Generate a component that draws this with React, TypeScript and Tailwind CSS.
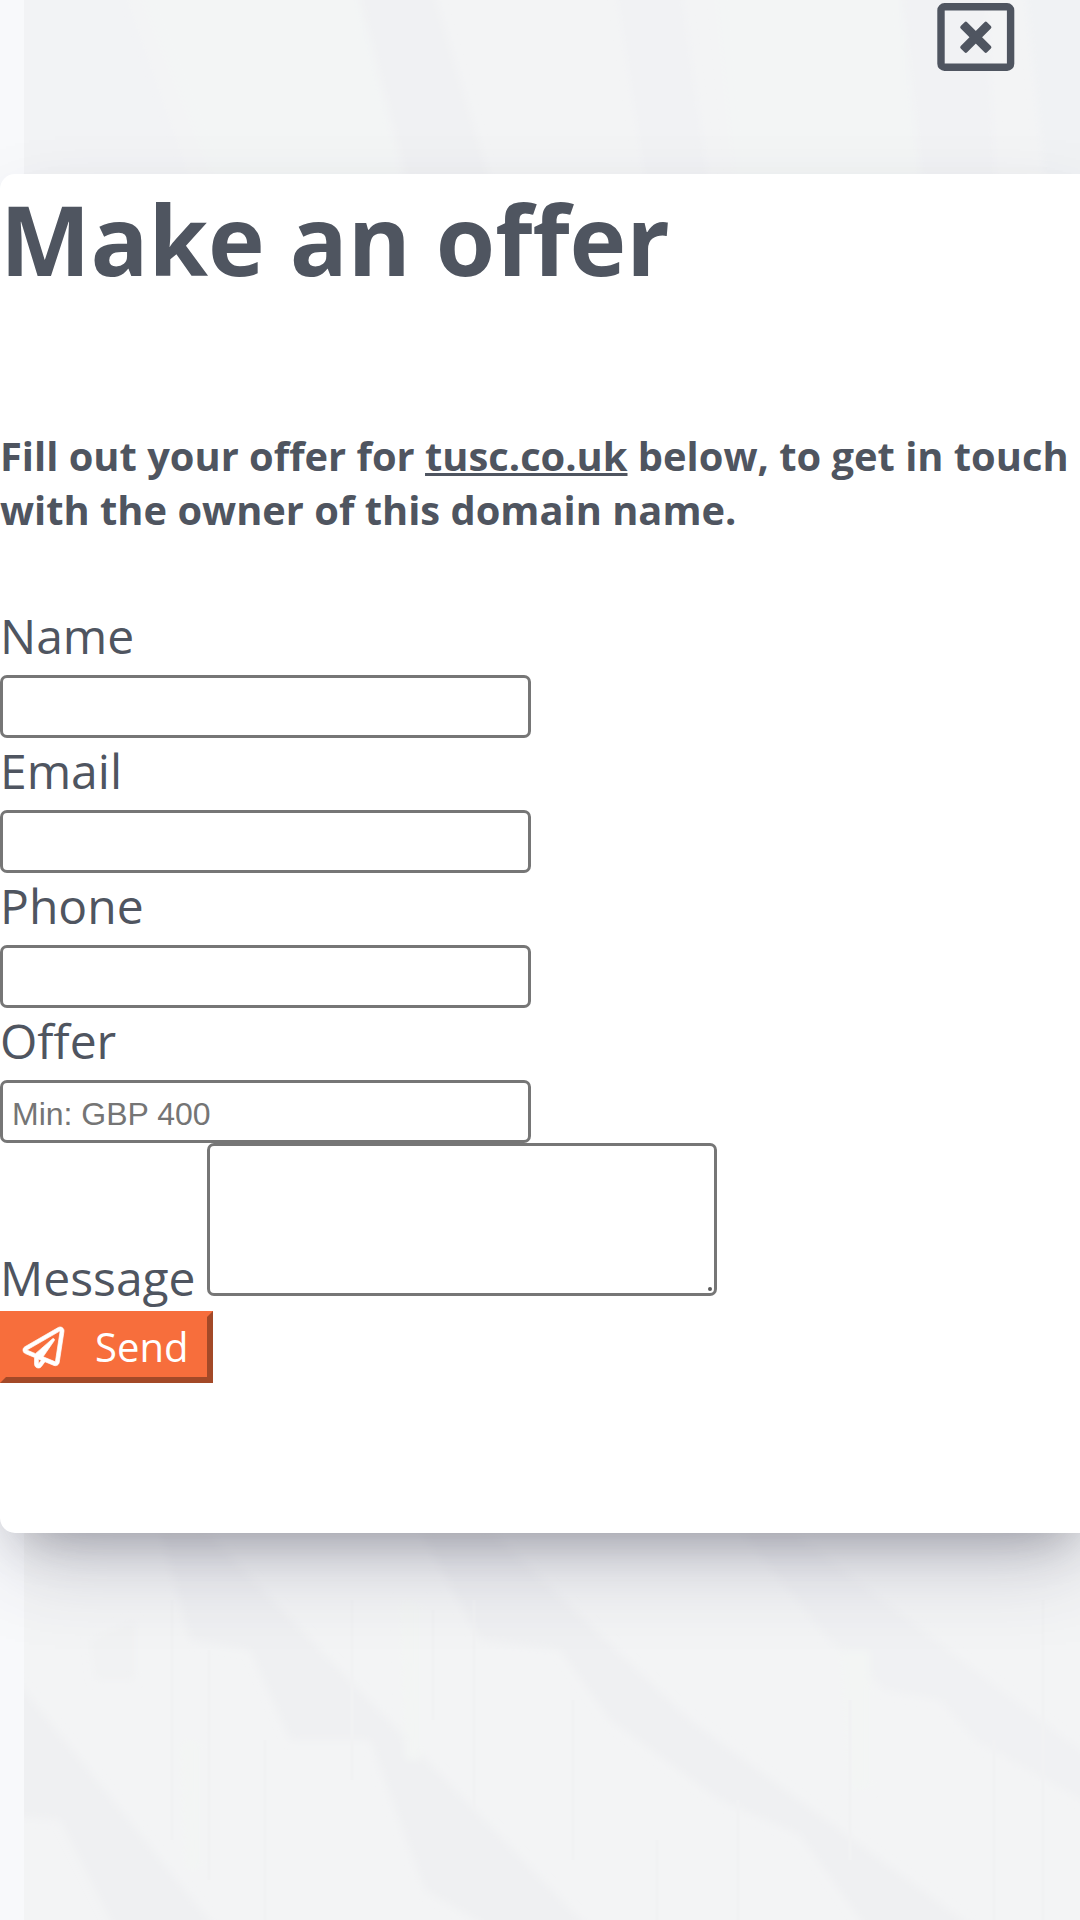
import { useState } from "react";
import { FaRegPaperPlane } from "react-icons/fa";

const fields = [
  { id: "name", label: "Name", placeholder: "" },
  { id: "email", label: "Email", placeholder: "" },
  { id: "phone", label: "Phone", placeholder: "" },
  { id: "offer", label: "Offer", placeholder: "Min: GBP 400" },
];

// faded building photo behind the dialog
const Backdrop = () => (
  <svg className="absolute inset-0" width="1080" height="1920" viewBox="0 0 1080 1920" aria-hidden="true">
    <defs>
      <filter id="soft" x="-10%" y="-10%" width="120%" height="120%">
        <feGaussianBlur stdDeviation="4" />
      </filter>
      <clipPath id="photo">
        <rect x="24" y="0" width="1056" height="1920" />
      </clipPath>
    </defs>
    <rect x="24" y="0" width="1056" height="1920" fill="#f3f4f5" />
    <g clipPath="url(#photo)">
      <g filter="url(#soft)">
        <path d="M0 -20H120L190 180H0Z" fill="#f2f3f5" />
        <path d="M135 -20H355L400 180H215Z" fill="#f3f5f5" />
        <path d="M355 -20H430L490 180H407Z" fill="#f0f1f3" />
        <path d="M615 -20H680L708 180H645Z" fill="#f1f2f4" />
        <path d="M715 -20H900L920 180H735Z" fill="#f3f5f5" />
        <path d="M900 -20H985L995 180H922Z" fill="#f1f2f4" />
        <path d="M1025 -20H1100V180H1045Z" fill="#f0f2f4" />

        <path d="M160 1530H205L600 1940H510L425 1890L370 1740L290 1740L250 1650L190 1640Z" fill="#eff0f2" />
        <path d="M420 1530H490L690 1720L990 1940H875L800 1835L720 1800L610 1720L560 1650L480 1640Z" fill="#eff0f2" />
        <path d="M740 1530H790L1100 1765V1810L975 1740L940 1700L885 1690L830 1640Z" fill="#f0f1f3" />
        <path d="M0 1660L225 1940H120L60 1820L0 1815Z" fill="#eff0f2" />
        <path d="M90 1640L135 1620V1680H95Z" fill="#f1f2f3" />
        <path d="M400 1600H420V1760H405ZM840 1650H870V1790H850ZM180 1740H200V1870H185Z" fill="#f3f5f4" />
      </g>
      <path
        d="M172 1600V1840M209 1650V1880M265 1740V1920M352 1600V1780M433 1610V1720M474 1600V1810M573 1700V1860M657 1840V1920M738 1800V1920M850 1700V1860M994 1740V1920M1043 1600V1920"
        stroke="#f1f2f3"
        strokeWidth="3"
      />
    </g>
  </svg>
);

const CloseIcon = () => (
  <svg width="78" height="69" viewBox="0 0 78 69" aria-hidden="true">
    <rect x="4" y="3.8" width="69.6" height="60.4" rx="3.5" fill="none" stroke="#4f5560" strokeWidth="7.4" />
    <g fill="#4f5560" transform="translate(38.8 34.2)">
      <rect x="-18.6" y="-4.5" width="37.2" height="9" rx="1.8" transform="rotate(45)" />
      <rect x="-18.6" y="-4.5" width="37.2" height="9" rx="1.8" transform="rotate(-45)" />
    </g>
  </svg>
);

const App = () => {
  const [values, setValues] = useState<Record<string, string>>({});
  const [message, setMessage] = useState("");

  return (
    <div className="relative h-[1920px] w-[1080px] overflow-hidden bg-[#f8f9fb] font-['Open_Sans',sans-serif] text-[#4f5560]">
      <Backdrop />

      <div className="relative flex h-[174px] justify-end pt-[3px] pr-[65px]">
        <button type="button" aria-label="Close" className="h-[69px] w-[78px]">
          <CloseIcon />
        </button>
      </div>

      <div className="relative h-[1359px] w-[1095px] rounded-[15px] bg-white shadow-[0_39px_81px_-15px_rgba(50,50,93,0.25),0_24px_48px_-24px_rgba(0,0,0,0.3)]">
        <h1 className="h-[255px] text-[96px] leading-[129px] font-bold">Make an offer</h1>

        <h2 className="h-[169px] w-[1080px] text-[39.84px] leading-[54px] font-bold">
          <span className="whitespace-nowrap">
            Fill out your offer for <u className="underline">tusc.co.uk</u> below, to get in touch
          </span>
          <br />
          with the owner of this domain name.
        </h2>

        <form onSubmit={(e) => e.preventDefault()}>
          {fields.map((field) => (
            <div key={field.id} className="flex h-[135px] flex-col">
              <label htmlFor={field.id} className="h-[72px] pt-[2px] text-[48px] leading-[72px]">
                {field.label}
              </label>
              <input
                id={field.id}
                value={values[field.id] || ""}
                onChange={(e) => setValues({ ...values, [field.id]: e.target.value })}
                placeholder={field.placeholder}
                className="mt-[5px] h-[63px] w-[531px] shrink-0 rounded-[7px] border-[3px] border-[#767676] bg-white px-[9px] pt-[5px] font-['Liberation_Sans',sans-serif] text-[32px] placeholder:text-[#757575]"
              />
            </div>
          ))}

          <div className="flex h-[173px] items-start pt-[5px]">
            <label htmlFor="message" className="w-[207px] pt-[102px] text-[48px] leading-[65px]">
              Message
            </label>
            <div className="relative h-[153px] w-[510px]">
              <textarea
                id="message"
                value={message}
                onChange={(e) => setMessage(e.target.value)}
                className="block h-full w-full resize-none rounded-[7px] border-[3px] border-[#767676] bg-white"
              />
              <span className="absolute right-[5px] bottom-[5px] size-[4px] rounded-full bg-[#5a5a5a]" />
            </div>
          </div>

          <button
            type="submit"
            className="flex h-[72px] w-[213px] items-center border-[6px] border-t-[#f76e3c] border-r-[#a34928] border-b-[#a34928] border-l-[#f76e3c] bg-[#f76e3c] pl-[17px] text-[40px] text-white"
          >
            <FaRegPaperPlane className="size-[41px] overflow-visible stroke-white stroke-[9px]" />
            <span className="ml-[31px]">Send</span>
          </button>
        </form>
      </div>
    </div>
  );
};

export default App;
